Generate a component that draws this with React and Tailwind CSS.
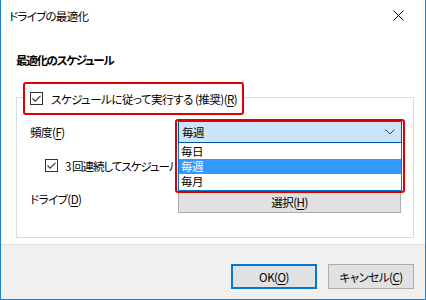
import { useState } from "react";

function CheckBox() {
  return (
    <span className="w-[13px] h-[13px] border border-[#333333] bg-white flex items-center justify-center shrink-0">
      <svg width="11" height="11" viewBox="0 0 11 11">
        <path d="M1.5 5.5 L4.2 8.2 L9.5 2.8" fill="none" stroke="#333333" strokeWidth="1.1" />
      </svg>
    </span>
  );
}

function Key({ children }) {
  return <span className="underline underline-offset-2">{children}</span>;
}

export default function App() {
  const [freq, setFreq] = useState("毎週");
  const options = ["毎日", "毎週", "毎月"];

  return (
    <div className="w-[426px] h-[300px] bg-white border-l border-r border-b border-[#1883d7] flex flex-col text-[11.5px] leading-[16px] tracking-[-0.5px] text-black font-['Noto_Sans_CJK_JP','Noto_Sans',sans-serif] [font-feature-settings:'palt'] overflow-hidden">
      {/* Title bar */}
      <div className="h-[31px] flex items-center justify-between pl-[8px] pr-[21px] shrink-0">
        <span className="pt-[1px] tracking-[-0.7px]">ドライブの最適化</span>
        <svg width="11" height="11" viewBox="0 0 11 11">
          <path d="M0.5 0.5 L10.5 10.5 M10.5 0.5 L0.5 10.5" stroke="#000" strokeWidth="1" />
        </svg>
      </div>

      {/* Body */}
      <div className="flex-1 pl-[15px] pr-[11px] pt-[21px]">
        <div className="font-bold tracking-[-1.3px]">最適化のスケジュール</div>

        <div className="relative mt-[29px] w-[398px] h-[141px] border border-[#dcdcdc] pl-[13px] pt-[23px]">
          {/* group caption with highlight */}
          <div className="absolute -top-[16px] left-[6px] w-[221px] h-[33px] border-2 border-[#e00000] rounded-[3px] bg-white flex items-center pl-[5px] gap-[8px]">
            <CheckBox />
            <span className="whitespace-nowrap">
              スケジュールに従って実行する (推奨)(<Key>R</Key>)
            </span>
          </div>

          {/* frequency row */}
          <div className="flex items-center h-[22px]">
            <span className="w-[148px]">
              頻度(<Key>F</Key>)
            </span>
            <div className="relative w-[224px] h-[22px]">
              <div className="absolute -top-[2px] -left-[3px] w-[230px] h-[74px] border-2 border-[#e00000] rounded-[3px]" />
              <div className="relative h-full border border-[#005499] bg-[#cce4f7] flex items-center justify-between pl-[3px] pr-[6px]">
                <span>{freq}</span>
                <svg width="10" height="6" viewBox="0 0 10 6">
                  <path d="M0.5 0.5 L5 5 L9.5 0.5" fill="none" stroke="#444" strokeWidth="1" />
                </svg>
              </div>
              <ul className="absolute top-full left-0 w-full h-[48px] bg-white border border-[#0078d7] border-t-0 z-10 pt-[1px]">
                {options.map((o) => (
                  <li
                    key={o}
                    onClick={() => setFreq(o)}
                    className={`h-[15px] leading-[15px] pl-[2px] overflow-hidden ${o === freq ? "bg-[#3399ff] text-white" : ""}`}
                  >
                    {o}
                  </li>
                ))}
              </ul>
            </div>
          </div>

          {/* run 3 times row */}
          <div className="flex items-center gap-[7px] mt-[15px] h-[15px] pl-[15px]">
            <CheckBox />
            <span className="w-[108px] overflow-hidden whitespace-nowrap tracking-[-1px]">3 回連続してスケジュール</span>
          </div>

          {/* drive row */}
          <div className="flex items-start mt-[17px]">
            <span className="w-[148px] pt-[1px]">
              ドライブ(<Key>D</Key>)
            </span>
            <button className="w-[223px] h-[23px] bg-[#e1e1e1] border border-[#adadad]">
              選択(<Key>H</Key>)
            </button>
          </div>
        </div>
      </div>

      {/* Footer */}
      <div className="h-[55px] shrink-0 bg-[#f0f0f0] border-t border-[#dfdfdf] flex justify-end items-start gap-[11px] pt-[19px] pr-[11px]">
        <button className="w-[86px] h-[25px] bg-[#e1e1e1] border-2 border-[#0078d7]">
          OK(<Key>O</Key>)
        </button>
        <button className="w-[86px] h-[25px] bg-[#e1e1e1] border border-[#adadad]">
          キャンセル(<Key>C</Key>)
        </button>
      </div>
    </div>
  );
}
